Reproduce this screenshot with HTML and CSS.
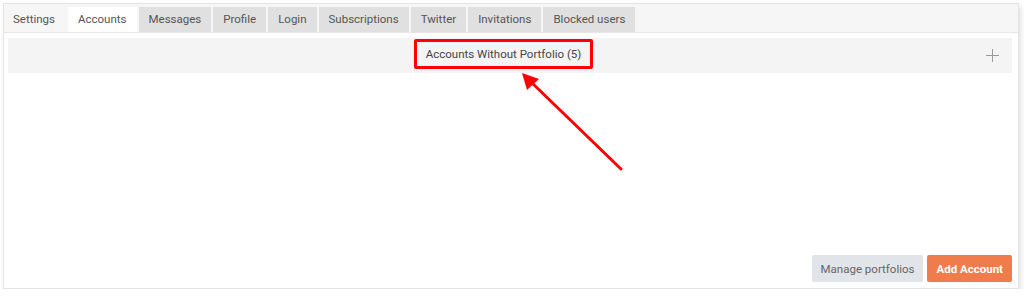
FILE: index.html
```html
<!DOCTYPE html>
<html lang="en">
<head>
  <meta charset="UTF-8">
  <title>Accounts</title>
  <link rel="stylesheet" href="styles.css">
</head>
<body>

<div class="frame">
  <!-- Tabs -->
  <div class="tabs">
    <div class="tab tab-plain">Settings</div>
    <div class="tab tab-active">Accounts</div>
    <div class="tab">Messages</div>
    <div class="tab">Profile</div>
    <div class="tab">Login</div>
    <div class="tab">Subscriptions</div>
    <div class="tab">Twitter</div>
    <div class="tab">Invitations</div>
    <div class="tab">Blocked users</div>
  </div>

  <div class="content">
    <!-- Panel header -->
    <div class="panel-head">
      <div class="panel-title"><span class="highlight">Accounts Without Portfolio (5)</span></div>
      <div class="panel-add">
        <svg width="13" height="13" viewBox="0 0 13 13"><path d="M6.5 0v13M0 6.5h13" stroke="#9a9a9a" stroke-width="1" fill="none"/></svg>
      </div>
    </div>

    <div class="spacer"></div>

    <div class="actions">
      <button class="btn btn-light">Manage portfolios</button>
      <button class="btn btn-orange">Add Account</button>
    </div>
  </div>
</div>

<!-- annotation arrow -->
<svg class="arrow" width="1024" height="298" viewBox="0 0 1024 298">
  <line x1="621" y1="169" x2="530" y2="81" stroke="#ff0000" stroke-width="3" stroke-linecap="round"/>
  <polygon points="522,73 527,90 539,79" fill="#ff0000"/>
</svg>

</body>
</html>
```

FILE: styles.css
```css
body {
  margin: 0;
  padding: 3px 5px 0 3px;
  font-family: 'Roboto', sans-serif;
  background-color: #ffffff;
  color: #555;
}
.frame {
  height: 284px;
  border: 1px solid #e4e4e4;
  box-shadow: 2px 3px 5px rgba(0,0,0,0.12);
  display: flex;
  flex-direction: column;
}
.tabs {
  display: flex;
  gap: 2px;
  padding: 3px 0 0 0;
  background-color: #f6f6f6;
  border-bottom: 1px solid #e6e6e6;
}
.tab {
  padding: 0 10px;
  height: 25px;
  line-height: 25px;
  font-size: 11.5px;
  background-color: #e0e0e0;
  color: #555;
}
.tab-plain {
  background-color: transparent;
  padding: 0 11px 0 9px;
}
.tab-active {
  background-color: #fff;
}
.content {
  flex: 1;
  display: flex;
  flex-direction: column;
  padding: 5px 6px 6px 4px;
}
.panel-head {
  display: flex;
  align-items: center;
  height: 35px;
  background-color: #f4f4f4;
  padding: 0 13px 0 13px;
}
.panel-title {
  flex: 1;
  text-align: center;
}
.highlight {
  display: inline-block;
  font-size: 11.5px;
  color: #444;
  border: 3px solid #ff0000;
  border-radius: 2px;
  padding: 5px 9px;
  margin-bottom: 3px;
}
.panel-add {
  width: 13px;
  height: 13px;
  display: flex;
}
.spacer {
  flex: 1;
}
.actions {
  display: flex;
  justify-content: flex-end;
  gap: 4px;
}
.btn {
  height: 27px;
  padding: 0 9px;
  border: none;
  border-radius: 2px;
  font-family: 'Roboto', sans-serif;
  font-size: 11.5px;
}
.btn-light {
  background-color: #e1e5ea;
  color: #666;
}
.btn-orange {
  background-color: #f07b4b;
  color: #fff;
  font-weight: bold;
}
.arrow {
  position: absolute;
  left: 0;
  top: 0;
  pointer-events: none;
}
```
